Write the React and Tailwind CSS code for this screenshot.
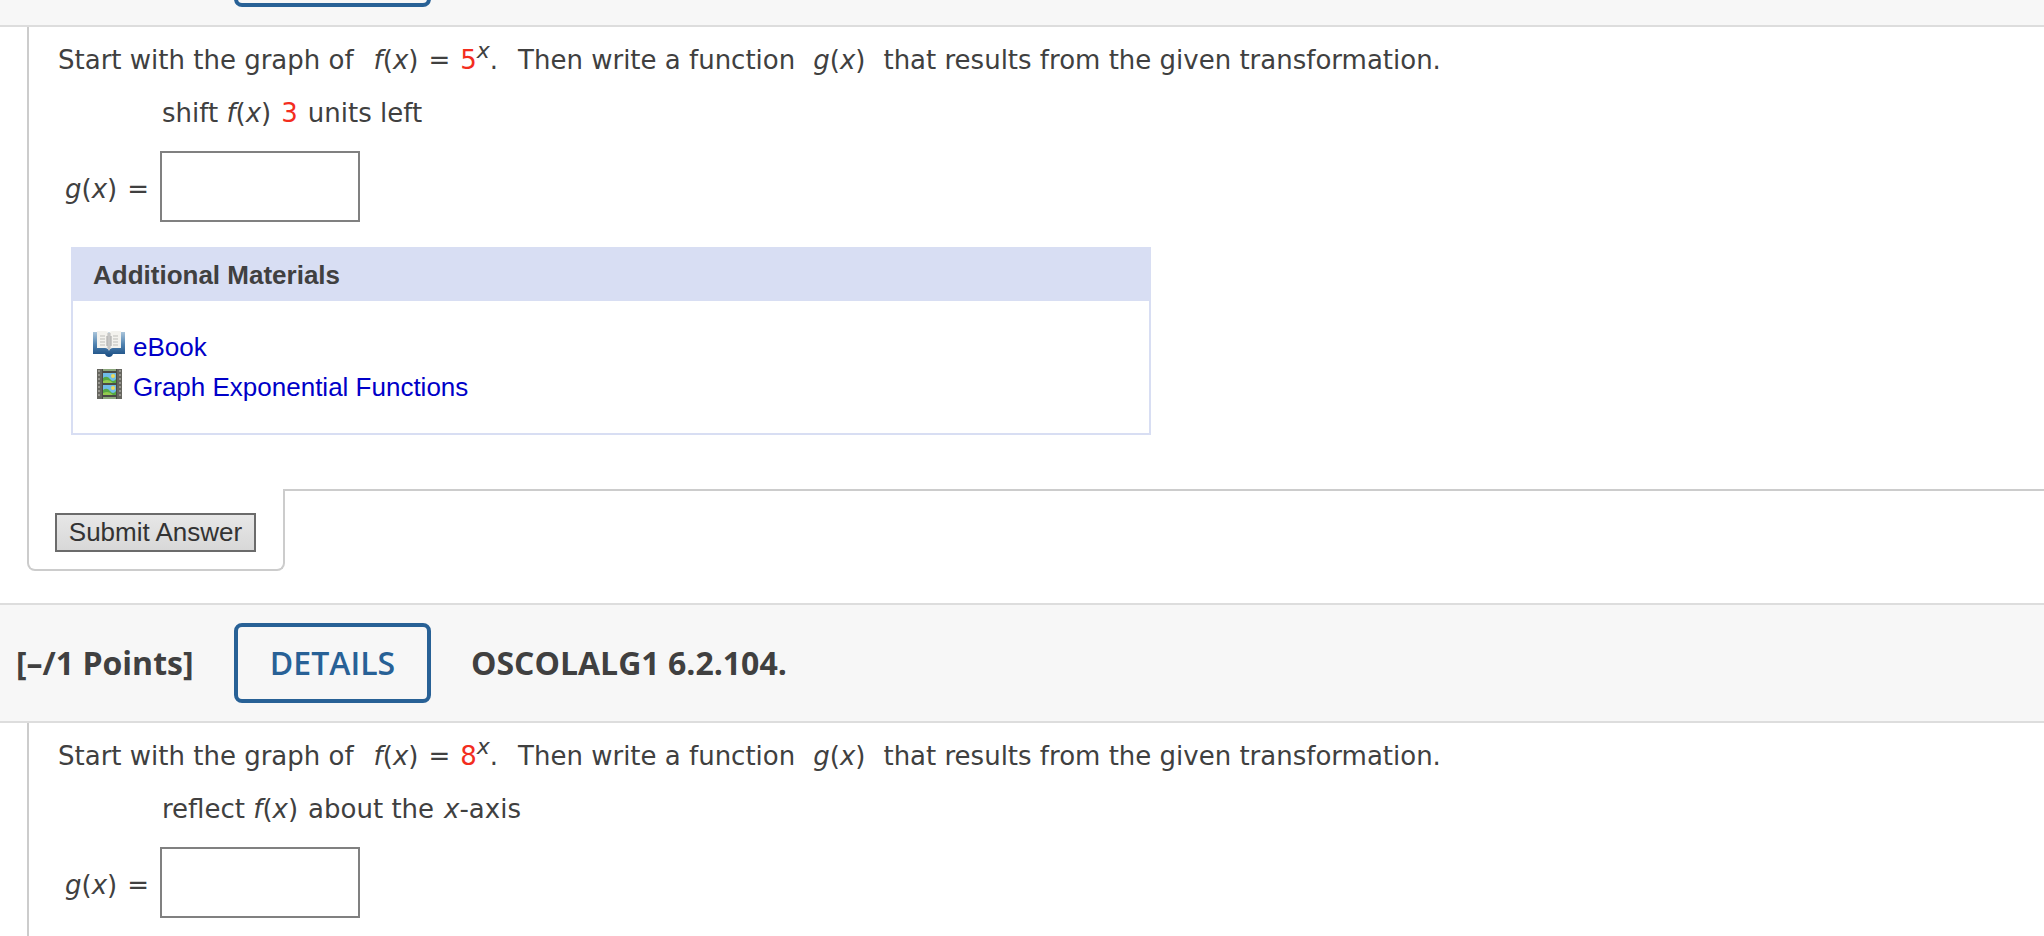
const QUESTIONS = [
  {
    id: 'q1',
    base: '5',
    task: (
      <>
        shift <i>f</i>(<i>x</i>)<span className="mx-2.5 text-[#f32d1e]">3</span>units left
      </>
    ),
    submit: true,
  },
  {
    id: 'q2',
    points: '[–/1 Points]',
    code: 'OSCOLALG1 6.2.104.',
    base: '8',
    task: (
      <>
        reflect <i>f</i>(<i>x</i>)<span className="mx-2.5">about the</span><i>x</i>-axis
      </>
    ),
  },
]

function BookIcon() {
  return (
    <svg className="w-8 h-8 shrink-0" viewBox="0 0 32 32" aria-hidden="true">
      <defs>
        <linearGradient id="cover" x1="0" y1="0" x2="0" y2="1">
          <stop offset="0" stopColor="#a9c4da" />
          <stop offset="0.5" stopColor="#4f82b0" />
          <stop offset="1" stopColor="#174a80" />
        </linearGradient>
      </defs>
      <path d="M0 3h32v22H20q-1 3-4 3t-4-3H0z" fill="url(#cover)" />
      <path d="M4 2h8q3 0 4 2q1-2 4-2h8v17h-8q-3 0-4 3q-1-3-4-3H4z" fill="#f3f2ee" />
      <path d="M14 4h4v15l-2 2l-2-2z" fill="#d5d5d3" />
      <path d="M16 4v17" stroke="#b5b5b5" strokeWidth="1" />
      <path d="M7 7h5M7 10h5M7 13h5M7 16h5M20 7h5M20 10h5M20 13h5M20 16h5" stroke="#bdbdb9" strokeWidth="1" />
      <path d="M14 7v10M18 7v10" stroke="#a0a0a0" strokeWidth="1" />
    </svg>
  )
}

function FilmIcon() {
  return (
    <svg className="w-8 h-8 shrink-0" viewBox="0 0 32 32" aria-hidden="true">
      <path d="M4 0h25v30H4z" fill="#4a4a46" />
      <path d="M4 0h5v30H4zM24 0h5v30h-5z" fill="#66665f" />
      <path d="M6 1v28M27 1v28" stroke="#96958e" strokeWidth="2" strokeDasharray="2 2" />
      <path d="M10 0h13v2H10zM10 28h13v2H10z" fill="#8ba77c" />
      {[4, 16].map((y) => (
        <g key={y}>
          <path d={`M10 ${y}h13v10H10z`} fill="#6fbce9" />
          <path d={`M10 ${y + 5}q4-3 7 1t6 0v4H10z`} fill="#55a943" />
          <path d={`M10 ${y + 8}q6-3 10 2H10z`} fill="#94cb50" />
          <circle cx="20" cy={y + 3} r="2" fill="#ecd95b" />
        </g>
      ))}
    </svg>
  )
}

function QuestionHeader({ points, code }) {
  return (
    <header className="flex items-center h-[120px] shrink-0 border-y-2 border-[#ddd] bg-[#f7f7f7] font-['Open_Sans',sans-serif] text-[32px] text-[#404040]">
      <span className="w-[234px] shrink-0 pl-4 font-bold whitespace-nowrap">{points}</span>
      <button
        type="button"
        aria-label="Details"
        className="w-[197px] h-20 shrink-0 rounded-lg border-4 border-[#286196] font-semibold text-[#286196]"
      >
        {code && 'DETAILS'}
      </button>
      {code && <h2 className="ml-10 font-bold">{code}</h2>}
    </header>
  )
}

function Materials() {
  return (
    <section className="mt-[25px] ml-[42px] max-w-[1080px] border-2 border-[#d8def3] font-['Liberation_Sans',Arial,sans-serif] text-[26px]">
      <h3 className="h-[52px] pl-5 bg-[#d8def3] font-bold leading-[52px] text-[#404040]">
        Additional Materials
      </h3>
      <ul className="pt-6 pb-7 pl-5 text-[#0000c8]">
        <li className="flex items-start gap-2 h-10 pt-1">
          <BookIcon />
          <a href="#ebook" className="leading-9">eBook</a>
        </li>
        <li className="flex items-start gap-2 h-10 pt-1">
          <FilmIcon />
          <a href="#graph" className="leading-9">Graph Exponential Functions</a>
        </li>
      </ul>
    </section>
  )
}

function Question({ question }) {
  const { id, base, task, submit } = question
  return (
    <article>
      <div
        className={`ml-[27px] border-l-2 border-[#ccc] font-['DejaVu_Sans',Verdana,sans-serif] text-[26px] leading-[30px] text-[#404040] ${submit ? 'h-[462px]' : 'h-[240px]'}`}
      >
        <p className="pt-[18px] pl-[29px] whitespace-nowrap">
          Start with the graph of
          <span className="mx-5">
            <i>f</i>(<i>x</i>)<span className="mx-2.5">=</span>
            <span className="text-[#f32d1e]">{base}</span>
            <sup className="text-[22px] leading-none"><i>x</i></sup>.
          </span>
          Then write a function
          <span className="mx-[18px]"><i>g</i>(<i>x</i>)</span>
          that results from the given transformation.
        </p>
        <p className="mt-[23px] pl-[133px]">{task}</p>
        <div className="flex items-center mt-[23px] pl-9">
          <label htmlFor={id} className="w-[95px] pt-1 whitespace-nowrap">
            <i>g</i>(<i>x</i>)<span className="ml-2.5">=</span>
          </label>
          <input id={id} type="text" className="w-[200px] h-[71px] border-2 border-[#808080] bg-white px-2" />
        </div>
        {submit && <Materials />}
      </div>
      {submit && (
        <div className="flex ml-[27px] mb-8">
          <div className="w-[258px] h-[82px] shrink-0 pt-6 pl-[26px] border-x-2 border-b-2 border-[#ccc] rounded-b-lg">
            <button
              type="submit"
              className="block w-[201px] h-[39px] border-2 border-[#6b6b6b] bg-linear-to-b from-[#e7e7e7] to-[#d8d8d8] font-['Liberation_Sans',Arial,sans-serif] text-[26px] leading-8 pb-0.5 whitespace-nowrap text-[#333]"
            >
              Submit Answer
            </button>
          </div>
          <div className="flex-1 border-t-2 border-[#ccc]" />
        </div>
      )}
    </article>
  )
}

export default function App() {
  const [first, second] = QUESTIONS
  return (
    <main className="bg-white overflow-hidden">
      {/* Scrolled so that only the foot of the first header shows */}
      <div className="flex flex-col justify-end h-[27px] overflow-hidden">
        <QuestionHeader />
      </div>
      <Question question={first} />
      <QuestionHeader points={second.points} code={second.code} />
      <Question question={second} />
    </main>
  )
}
